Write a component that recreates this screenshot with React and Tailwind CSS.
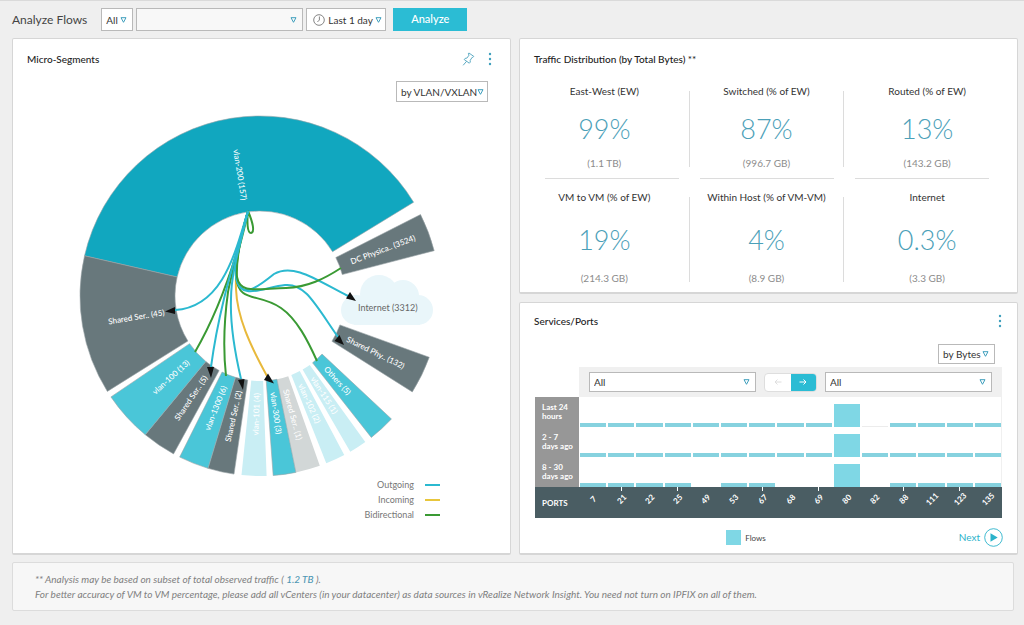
import React, { useState } from 'react';
import clsx from 'clsx';

const CX = 260;
const CY = 297;
const R_OUTER = 180;
const R_INNER = 85;

const TEAL = '#11a7bf';
const SLATE = '#68787c';
const CYAN = '#4ac6d8';
const PALE = '#c9eef4';
const SILVER = '#d2d7d7';

// angles in degrees, clockwise from three o'clock
const segments = [
    { label: 'vlan-200 (157)', from: 192.9, to: 328.6, fill: TEAL },
    { label: 'DC Physica.. (3524)', from: -26.9, to: -14.6, fill: SLATE },
    { label: 'Shared Phy.. (132)', from: 19.9, to: 32.2, fill: SLATE },
    { label: 'Others (5)', from: 43.1, to: 51.8, fill: CYAN },
    { label: 'vlan-115 (1)', from: 54.2, to: 59.9, fill: PALE },
    { label: 'vlan-102 (2)', from: 62.1, to: 68.4, fill: PALE },
    { label: 'Shared Ser.. (1)', from: 70.6, to: 78.5, fill: SILVER },
    { label: 'vlan-300 (3)', from: 78.5, to: 85.8, fill: CYAN },
    { label: 'vlan-101 (4)', from: 87.9, to: 95.9, fill: PALE },
    { label: 'Shared Ser.. (2)', from: 98.3, to: 106.8, fill: SLATE },
    { label: 'vlan-1300 (6)', from: 106.8, to: 116.5, fill: CYAN },
    { label: 'Shared Ser.. (5)', from: 118.7, to: 129.6, fill: SLATE },
    { label: 'vlan-100 (13)', from: 129.6, to: 145.9, fill: CYAN },
    { label: 'Shared Ser.. (45)', from: 148, to: 192.9, fill: SLATE },
];

const flows = [
    { color: '#3a9a34', d: 'M248 212 C247 222 247 234 251 234 C255 233 253 224 248 212' },
    { color: '#3a9a34', d: 'M248 212 C240 245 224 303 195 353' },
    { color: '#3a9a34', d: 'M248 212 C243 240 232 270 228 293 C224 322 223 350 226 377' },
    { color: '#e8b93c', d: 'M248 212 C240 240 235 262 236 290 C237 318 250 346 267 377' },
    { color: '#3a9a34', d: 'M248 212 C240 240 235 262 236 278 C239 305 258 293 281 309 C297 320 308 342 317 362' },
    { color: '#2bb9d0', d: 'M248 212 C240 240 236 262 236 276 C239 303 258 288 274 275 C293 264 315 280 348 297' },
    { color: '#2bb9d0', d: 'M248 212 C240 240 235 262 236 278 C240 303 264 288 285 286 C305 284 315 305 338 338' },
    { color: '#3a9a34', d: 'M248 212 C240 240 236 262 237 278 C240 295 255 290 286 289 C308 288 324 280 341 269' },
    { color: '#2bb9d0', d: 'M248 212 C236 250 224 308 175 311' },
    { color: '#2bb9d0', d: 'M248 212 C240 245 220 300 211 368' },
    { color: '#2bb9d0', d: 'M248 212 C239 250 231 275 231 300 C230 325 234 350 241 380' },
];

const arrowHeads = [
    '165,312.5 175,308 175,315',
    '211,379 207,368 214,368',
    '243,391 238,381 244.5,380',
    '264,381 268,374.5 274,384.5',
    '356,302 350,293 346,299.5',
    '344,346 339.5,336 334.5,342',
];

const legend = [
    { label: 'Outgoing', line: 'bg-[#2bb9d0]' },
    { label: 'Incoming', line: 'bg-[#e8c63c]' },
    { label: 'Bidirectional', line: 'bg-[#3a9a34]' },
];

const traffic = [
    [
        { label: 'East-West (EW)', value: '99%', size: '(1.1 TB)' },
        { label: 'Switched (% of EW)', value: '87%', size: '(996.7 GB)' },
        { label: 'Routed (% of EW)', value: '13%', size: '(143.2 GB)' },
    ],
    [
        { label: 'VM to VM (% of EW)', value: '19%', size: '(214.3 GB)' },
        { label: 'Within Host (% of VM-VM)', value: '4%', size: '(8.9 GB)' },
        { label: 'Internet', value: '0.3%', size: '(3.3 GB)' },
    ],
];

const ports = [7, 21, 22, 25, 49, 53, 67, 68, 69, 80, 82, 88, 111, 123, 135];
const tickedPorts = [21, 25, 67, 69, 88, 123];

const periods = [
    { lines: ['Last 24', 'hours'], empty: [], faint: [82] },
    { lines: ['2 - 7', 'days ago'], empty: [], faint: [] },
    { lines: ['8 - 30', 'days ago'], empty: [49, 68, 69, 82], faint: [] },
];

const polar = (r, deg) => {
    const a = (deg * Math.PI) / 180;
    return `${(CX + r * Math.cos(a)).toFixed(2)} ${(CY + r * Math.sin(a)).toFixed(2)}`;
};

const arcPath = ({ from, to }) => {
    const large = to - from > 180 ? 1 : 0;
    return `M${polar(R_OUTER, from)} A${R_OUTER} ${R_OUTER} 0 ${large} 1 ${polar(R_OUTER, to)} L${polar(R_INNER, to)} A${R_INNER} ${R_INNER} 0 ${large} 0 ${polar(R_INNER, from)} Z`;
};

const Caret = ({ className }) => (
    <svg width="7" height="7" viewBox="0 0 7 7" className={clsx('pointer-events-none absolute top-1/2 -translate-y-1/2', className)}>
        <path d="M1 1.2h5L3.5 5.8z" fill="none" stroke="#3f9fbd" strokeWidth="1" />
    </svg>
);

const Select = ({ label, options, icon, className, selectClass, caretClass = 'right-[6px]' }) => (
    <div className={clsx('relative shrink-0', className)}>
        {icon}
        <select
            aria-label={label}
            className={clsx('block h-full w-full appearance-none border border-[#b9b9b9] text-[10px] leading-4 text-[#333] outline-none', selectClass)}
        >
            {options.map((o) => (
                <option key={o}>{o}</option>
            ))}
        </select>
        <Caret className={caretClass} />
    </div>
);

const Card = ({ className, children }) => (
    <section className={clsx('rounded-xs border border-b-2 border-[#d6d6d6] bg-white', className)}>{children}</section>
);

const MoreButton = () => (
    <button type="button" aria-label="More options" className="flex h-4 w-2 items-center justify-center">
        <svg width="4" height="14" viewBox="0 0 4 14" fill="#3f9fbd">
            <circle cx="2" cy="2" r="1.2" />
            <circle cx="2" cy="7" r="1.2" />
            <circle cx="2" cy="12" r="1.2" />
        </svg>
    </button>
);

const SegmentLabel = ({ segment }) => {
    const mid = (segment.from + segment.to) / 2;
    const flipped = mid > 90;
    return (
        <text
            transform={`translate(${polar(97, mid)}) rotate(${flipped ? mid - 180 : mid})`}
            textAnchor={flipped ? 'end' : 'start'}
            dy="3"
            fill="#fff"
        >
            {segment.label}
        </text>
    );
};

const SegmentChart = () => (
    <svg viewBox="73 111 370 367" className="ml-[60px] h-[367px] w-[370px] font-medium" fontSize="8">
        {segments.map((s) => (
            <path key={s.label} d={arcPath(s)} fill={s.fill} stroke="#9aa5a8" strokeWidth={s.fill === PALE || s.fill === SILVER ? 0 : 0.6} />
        ))}
        <g fill="#e9f6fa">
            <circle cx="379" cy="295" r="19" />
            <circle cx="403" cy="297" r="16" />
            <circle cx="356" cy="311" r="15" />
            <circle cx="418" cy="311" r="15" />
            <rect x="354" y="300" width="66" height="26" />
        </g>
        <g fill="none" strokeWidth="2">
            {flows.map((f) => (
                <path key={f.d} d={f.d} stroke={f.color} />
            ))}
        </g>
        {segments.map((s) => (
            <SegmentLabel key={s.label} segment={s} />
        ))}
        <text x="358" y="312" fontSize="9" fontWeight="400" fill="#666">Internet (3312)</text>
        {arrowHeads.map((p) => (
            <polygon key={p} points={p} fill="#111" />
        ))}
    </svg>
);

const MicroSegments = () => (
    <Card className="flex flex-col">
        <div className="flex items-center justify-between pl-[14px] pr-[16px] pt-3">
            <h2 className="text-[10px] font-medium leading-4 text-[#222]">Micro-Segments</h2>
            <div className="flex items-center gap-[11px]">
                <button type="button" aria-label="Pin">
                    <svg width="13" height="14" viewBox="0 0 13 14" fill="none" stroke="#4da3bd" strokeWidth="0.9" strokeLinejoin="round" strokeLinecap="round">
                        <path d="M7.2 1.2l4.6 3.2-.9 1-.7-.1-2 3 .1 1.8-1 1.1-5.1-3.7.9-1.1 1.8-.3 2.2-3-.6-.9z" />
                        <path d="M4.4 9.5L1.4 13" />
                    </svg>
                </button>
                <MoreButton />
            </div>
        </div>
        <div className="flex justify-end pr-[22px] pt-[14px]">
            <Select label="Group by" options={['by VLAN/VXLAN', 'by Subnet']} className="h-[21px] w-[92px]" selectClass="pl-1" caretClass="right-1" />
        </div>
        <div className="mt-2">
            <SegmentChart />
        </div>
        <ul className="mr-[70px] pb-4 text-[9px] leading-[15px] text-[#777]">
            {legend.map((l) => (
                <li key={l.label} className="flex items-center justify-end gap-[11px]">
                    {l.label}
                    <span className={clsx('h-[2px] w-[15px]', l.line)} />
                </li>
            ))}
        </ul>
    </Card>
);

const TrafficCell = ({ item, valueClass }) => (
    <div className="flex flex-col items-center">
        <span className="text-[10px] leading-4 text-[#333]">{item.label}</span>
        <span className={clsx('text-[27px] font-light leading-8 text-[#4ba0b8]', valueClass)}>{item.value}</span>
        <span className="text-[10px] leading-4 text-[#8c8c8c]">{item.size}</span>
    </div>
);

const TrafficRow = ({ items, valueClass }) => (
    <div className="grid grid-cols-[169fr_1px_154fr_1px_166fr] pr-[7px]">
        {items.map((item, i) => (
            <React.Fragment key={item.label}>
                {i > 0 && <span className="mb-1 mt-2 bg-[#dcdcdc]" />}
                <TrafficCell item={item} valueClass={valueClass} />
            </React.Fragment>
        ))}
    </div>
);

const TrafficDistribution = () => (
    <Card>
        <h2 className="pl-[14px] pt-3 text-[10px] font-medium leading-4 text-[#222]">
            Traffic Distribution (by Total Bytes) **
        </h2>
        <div className="pb-[6px] pt-4">
            <TrafficRow items={traffic[0]} valueClass="mb-[10px] mt-[14px]" />
            <div className="mb-[10px] mt-[7px] flex gap-[21px] pl-[25px] pr-[28px]">
                <span className="h-px flex-1 bg-[#dcdcdc]" />
                <span className="h-px flex-1 bg-[#dcdcdc]" />
                <span className="h-px flex-1 bg-[#dcdcdc]" />
            </div>
            <TrafficRow items={traffic[1]} valueClass="mb-[14px] mt-[19px]" />
        </div>
    </Card>
);

const PortBar = ({ port, period }) => {
    if (period.empty.includes(port)) return <span className="flex-1" />;
    return (
        <span
            className={clsx(
                'flex-1',
                port === 80 && 'h-[23px] bg-[#7fd7e5]',
                port !== 80 && (period.faint.includes(port) ? 'h-px bg-[#ececec]' : 'h-1 bg-[#86d2df]')
            )}
        />
    );
};

const ServicesPorts = () => {
    const [page, setPage] = useState('prev');

    return (
        <Card>
            <div className="flex items-center justify-between pl-[14px] pr-[13px] pt-[10px]">
                <h2 className="text-[10px] font-medium leading-4 text-[#222]">Services/Ports</h2>
                <MoreButton />
            </div>
            <div className="flex justify-end pr-[22px] pt-[15px]">
                <Select label="Measure" options={['by Bytes', 'by Flows']} className="h-5 w-[57px]" selectClass="pl-1" />
            </div>
            <div className="mx-[15px] mt-[3px]">
                <div className="ml-[44px] flex h-[30px] items-center gap-2 bg-[#f0f0f0] px-[10px]">
                    <Select label="Source" options={['All']} className="h-5 flex-1" selectClass="bg-white pl-1" />
                    <div className="flex h-[19px] w-[53px] overflow-hidden rounded-sm border border-[#dedede] bg-white">
                        <button
                            type="button"
                            aria-label="Previous direction"
                            onClick={() => setPage('prev')}
                            className="flex flex-1 items-center justify-center text-[#dedede]"
                        >
                            <svg width="8" height="8" viewBox="0 0 8 8" fill="none" stroke="currentColor">
                                <path d="M7.5 4H1M3.5 1.5L1 4l2.5 2.5" />
                            </svg>
                        </button>
                        <button
                            type="button"
                            aria-label="Next direction"
                            aria-pressed={page === 'next'}
                            onClick={() => setPage('next')}
                            className="flex flex-1 items-center justify-center bg-[#2bbcd4] text-white"
                        >
                            <svg width="8" height="8" viewBox="0 0 8 8" fill="none" stroke="currentColor">
                                <path d="M.5 4H7M4.5 1.5L7 4 4.5 6.5" />
                            </svg>
                        </button>
                    </div>
                    <Select label="Destination" options={['All']} className="h-5 flex-1" selectClass="bg-white pl-1" />
                </div>
                {periods.map((period) => (
                    <div key={period.lines[0]} className="flex h-[30px]">
                        <div className="flex w-[44px] flex-col justify-center bg-[#979797] pl-[7px] text-[8px] font-bold leading-[9px] text-white">
                            {period.lines.map((line) => (
                                <span key={line} className="whitespace-nowrap">{line}</span>
                            ))}
                        </div>
                        <div className="flex flex-1 items-end gap-[2px] border-r border-[#f0f0f0] pl-px">
                            {ports.map((port) => (
                                <PortBar key={port} port={port} period={period} />
                            ))}
                        </div>
                    </div>
                ))}
                <div className="flex h-[31px] bg-[#4a5d63] text-[8px] font-bold text-white">
                    <span className="w-[44px] self-center pl-[7px]">PORTS</span>
                    <div className="flex flex-1">
                        {ports.map((port) => (
                            <div key={port} className="flex flex-1 flex-col items-center">
                                <span className={clsx('h-1 w-px', tickedPorts.includes(port) && 'bg-white')} />
                                <span className="-rotate-45 leading-4">{port}</span>
                            </div>
                        ))}
                    </div>
                </div>
            </div>
            <div className="grid grid-cols-[1fr_auto_1fr] items-center px-[14px] pb-[6px] pt-[10px]">
                <span />
                <span className="flex items-center gap-1 pr-[45px] text-[8px] text-[#444]">
                    <span className="h-[15px] w-[15px] bg-[#7fd7e5]" />
                    Flows
                </span>
                <button type="button" className="flex items-center gap-1 justify-self-end text-[10px] text-[#2bb3cb]">
                    Next
                    <svg width="19" height="19" viewBox="0 0 19 19">
                        <circle cx="9.5" cy="9.5" r="8.8" fill="none" stroke="#2bb3cb" strokeWidth="0.9" />
                        <path d="M6.5 5.2l7.2 4.3-7.2 4.3z" fill="#2bb3cb" />
                    </svg>
                </button>
            </div>
        </Card>
    );
};

const Toolbar = () => (
    <div className="flex items-center gap-[3px] py-[7px]">
        <h1 className="mr-[11px] text-[12px] leading-4 text-[#444]">Analyze Flows</h1>
        <Select label="Scope" options={['All']} className="h-[23px] w-[32px]" selectClass="bg-white pl-1" />
        <Select label="Entity" options={['']} className="h-[23px] w-[167px]" selectClass="bg-[#f8f8f8]" />
        <Select
            label="Time range"
            options={['Last 1 day', 'Last 7 days']}
            className="h-[23px] w-[80px]"
            selectClass="bg-white pl-[21px]"
            caretClass="right-1"
            icon={
                <svg width="12" height="12" viewBox="0 0 12 12" fill="none" stroke="#777" strokeWidth="0.9" className="pointer-events-none absolute left-[7px] top-[6px]">
                    <circle cx="6" cy="6" r="5.3" />
                    <path d="M6.4 2.5V6L4.4 8" />
                </svg>
            }
        />
        <button type="button" className="ml-1 h-[23px] w-[74px] bg-[#2bbcd4] text-[11px] font-medium text-white">
            Analyze
        </button>
    </div>
);

const App = () => (
    <div className="min-h-screen border-t border-[#dadada] bg-[#efefef] pl-3 pr-[6px] font-['Lato',sans-serif]">
        <Toolbar />
        <main className="grid grid-cols-2 gap-2">
            <MicroSegments />
            <div className="flex flex-col gap-2">
                <TrafficDistribution />
                <ServicesPorts />
            </div>
        </main>
        <footer className="mr-1 mt-[7px] rounded-xs border border-[#dcdcdc] bg-[#f7f7f7] px-[22px] pb-2 pt-[9px] text-[10px] italic leading-[15px] text-[#808080]">
            <p>
                ** Analysis may be based on subset of total observed traffic ( <a href="#traffic" className="font-medium text-[#4f97b4]">1.2 TB</a> ).
            </p>
            <p>
                For better accuracy of VM to VM percentage, please add all vCenters (in your datacenter) as data sources in vRealize Network Insight. You need not turn on IPFIX on all of them.
            </p>
        </footer>
    </div>
);

export default App;
